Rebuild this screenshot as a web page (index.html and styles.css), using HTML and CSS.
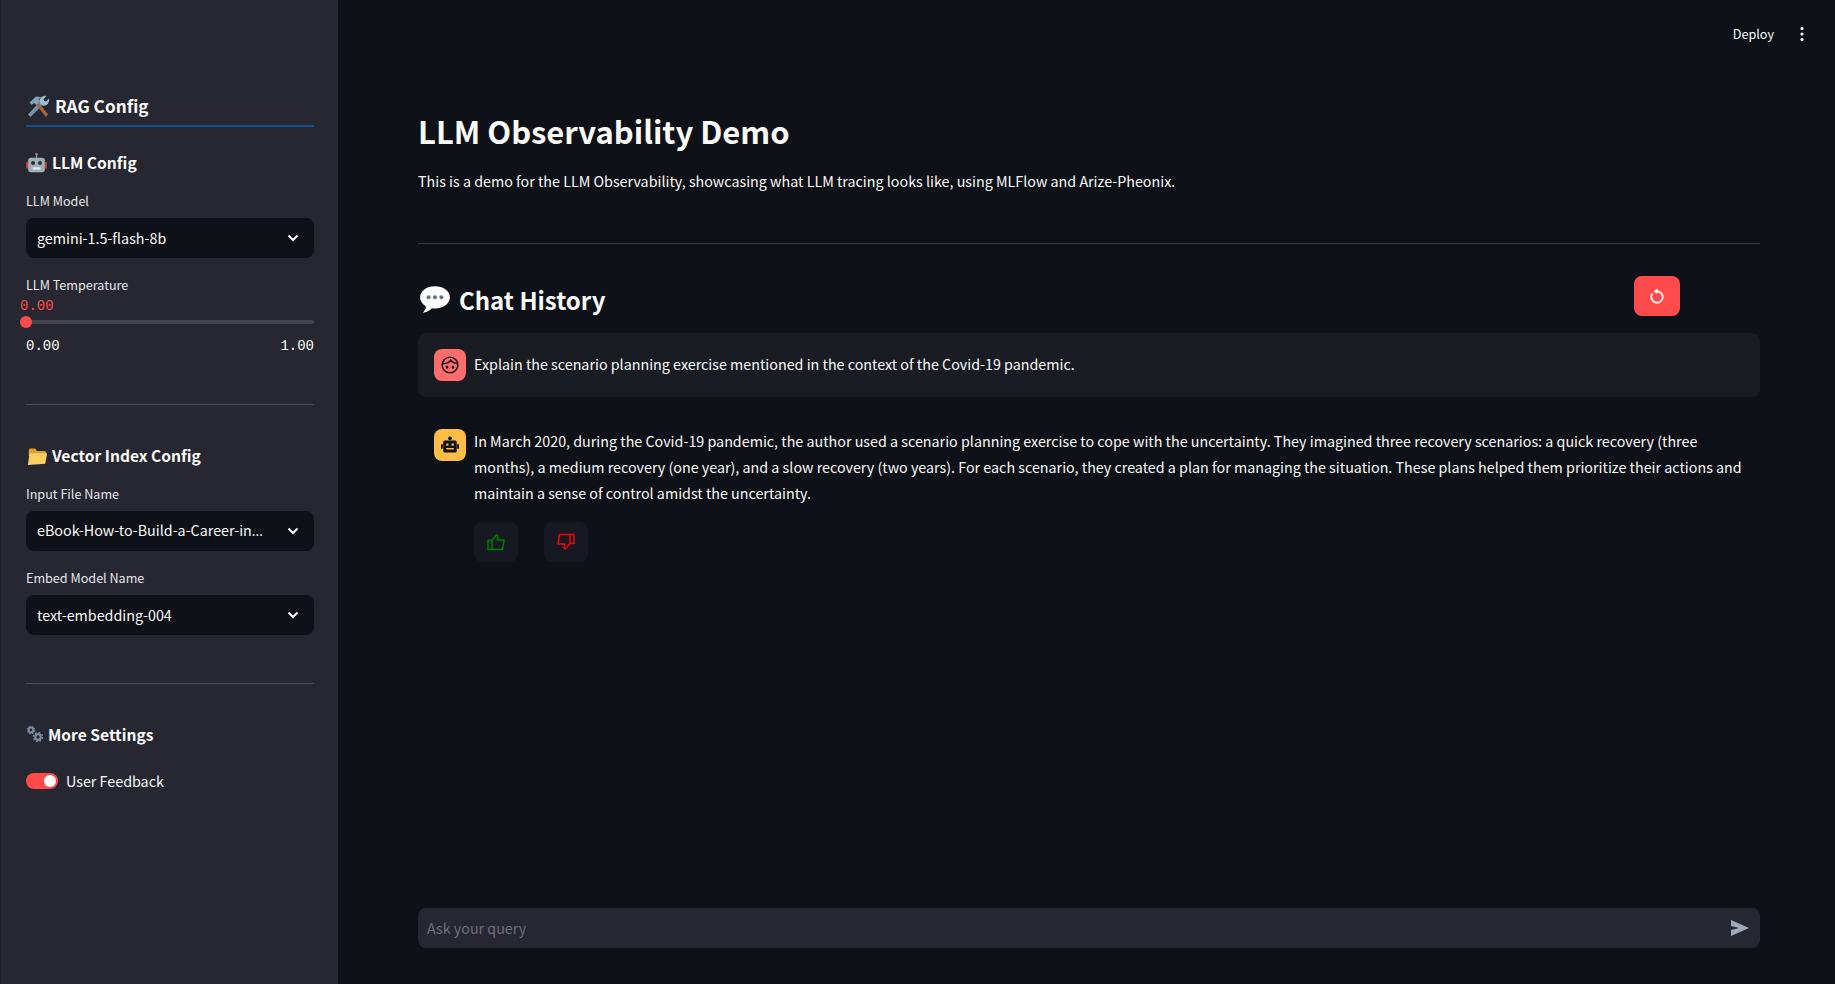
FILE: index.html
```html
<!DOCTYPE html>
<html lang="en">
<head>
  <meta charset="UTF-8">
  <meta name="viewport" content="width=device-width, initial-scale=1.0">
  <title>LLM Observability Demo</title>
  <link rel="stylesheet" href="styles.css">
</head>
<body>
  <aside class="sidebar">
    <h2 class="rag-title">
      <svg class="emoji emoji-tools" viewBox="0 0 24 24"><path d="M2 20.500 13.500 8l3 2.800L4.500 23z" fill="#6f97a8"/><path d="M22 20.500 11 6.500 8.500 8.500 20 23z" fill="#a9683a"/><path d="M3.500 8.500 10 2.500l5 .5-2.500 2.500 1 2.500-3 3-2.500-2-2.500 2z" fill="#7ea4b5"/><path d="M13.500 8.500a5.500 5.500 0 0 1 7-6.500l-3 3 .5 2 2 .5 3-3a5.500 5.500 0 0 1-6.500 7z" fill="#9cc0cf"/></svg>
      <span>RAG Config</span>
    </h2>
    <h3 class="section-title llm-title">
      <svg class="emoji" viewBox="0 0 24 24"><circle cx="12" cy="2.500" r="1.500" fill="#c9716f"/><rect x="11.300" y="3" width="1.400" height="4" fill="#8a99a3"/><rect x="0" y="11" width="3" height="8" rx="1" fill="#c8383a"/><rect x="21" y="11" width="3" height="8" rx="1" fill="#c8383a"/><rect x="2.500" y="6.500" width="19" height="16.500" rx="3" fill="#9fb0b9"/><circle cx="8" cy="12.500" r="2.300" fill="#2c3338"/><circle cx="16" cy="12.500" r="2.300" fill="#2c3338"/><rect x="7.500" y="17.500" width="9" height="2.500" fill="#e6e9eb"/></svg>
      <span>LLM Config</span>
    </h3>
    <label class="field-label">LLM Model</label>
    <div class="select"><span class="select-value">gemini-1.5-flash-8b</span><svg class="chevron" viewBox="0 0 16 16"><path d="M3.500 5.500 8 10l4.500-4.500" fill="none" stroke="#fafafa" stroke-width="2"/></svg></div>
    <label class="field-label temp-label">LLM Temperature</label>
    <div class="slider">
      <div class="slider-value">0.00</div>
      <div class="slider-track"><span class="slider-thumb"></span></div>
      <div class="slider-range"><span>0.00</span><span>1.00</span></div>
    </div>
    <hr class="side-rule first-rule">
    <h3 class="section-title vector-title">
      <svg class="emoji emoji-folder" viewBox="0 0 24 24"><path d="M3 7a2 2 0 0 1 2-2h5l2 2.500h8a2 2 0 0 1 2 2V13H3z" fill="#e0a030"/><path d="M4 10h19l-2 11.500-19 1.500z" fill="#fcd060"/></svg>
      <span>Vector Index Config</span>
    </h3>
    <label class="field-label">Input File Name</label>
    <div class="select"><span class="select-value">eBook-How-to-Build-a-Career-in<span class="ellipsis">…</span></span><svg class="chevron" viewBox="0 0 16 16"><path d="M3.500 5.500 8 10l4.500-4.500" fill="none" stroke="#fafafa" stroke-width="2"/></svg></div>
    <label class="field-label embed-label">Embed Model Name</label>
    <div class="select"><span class="select-value">text-embedding-004</span><svg class="chevron" viewBox="0 0 16 16"><path d="M3.500 5.500 8 10l4.500-4.500" fill="none" stroke="#fafafa" stroke-width="2"/></svg></div>
    <hr class="side-rule second-rule">
    <h3 class="section-title more-title">
      <svg class="emoji gears" viewBox="0 0 18 18"><circle cx="5" cy="5" r="2.400" fill="none" stroke="#7d8d9c" stroke-width="2"/><circle cx="5" cy="5" r="3.900" fill="none" stroke="#7d8d9c" stroke-width="1" stroke-dasharray="1.600 1.500"/><circle cx="12" cy="12" r="2.800" fill="none" stroke="#7d8d9c" stroke-width="2.200"/><circle cx="12" cy="12" r="4.600" fill="none" stroke="#7d8d9c" stroke-width="1.200" stroke-dasharray="1.900 1.700"/></svg>
      <span>More Settings</span>
    </h3>
    <div class="toggle-row"><span class="toggle"><span class="toggle-knob"></span></span><span>User Feedback</span></div>
  </aside>

  <main class="main">
    <header class="topbar">
      <span class="deploy">Deploy</span>
      <svg class="kebab" viewBox="0 0 4 16"><circle cx="2" cy="2.500" r="1.600"/><circle cx="2" cy="8" r="1.600"/><circle cx="2" cy="13.500" r="1.600"/></svg>
    </header>
    <div class="content">
      <h1>LLM Observability Demo</h1>
      <p class="intro">This is a demo for the LLM Observability, showcasing what LLM tracing looks like, using MLFlow and Arize-Pheonix.</p>
      <hr class="main-rule">
      <div class="history-head">
        <h2>
          <svg class="bubble" viewBox="0 0 32 32"><path d="M16 3C8 3 2 7.500 2 13.500c0 3.500 2 6.500 5.500 8.500-.3 2.500-1.500 4.500-3 6 3.500-.3 6.500-2 8.500-4.200 1 .2 2 .2 3 .2 8 0 14-4.500 14-10.500S24 3 16 3z" fill="#fff"/><circle cx="10" cy="13.500" r="1.900" fill="#65757f"/><circle cx="16" cy="13.500" r="1.900" fill="#65757f"/><circle cx="22" cy="13.500" r="1.900" fill="#65757f"/></svg>
          <span>Chat History</span>
        </h2>
        <button class="reset" type="button">
          <svg viewBox="0 0 16 16"><circle cx="8" cy="9" r="5.700" fill="none" stroke="#fff" stroke-width="1.700" stroke-dasharray="28 3" transform="rotate(-70 8 9)"/><path d="M8.500 0.500v5.500L4.500 3.200z" fill="#fff"/></svg>
        </button>
      </div>
      <div class="message user-message">
        <span class="avatar avatar-user">
          <svg viewBox="0 0 24 24" fill="none" stroke="#0e1117" stroke-width="1.900"><circle cx="12" cy="12" r="10.500"/><path d="M2.500 10c4 .5 8-1 10.500-4.500 1.500 2.500 4.500 4 8.500 4.500"/><circle cx="8" cy="15" r=".9" fill="#0e1117"/><circle cx="16" cy="15" r=".9" fill="#0e1117"/></svg>
        </span>
        <p>Explain the scenario planning exercise mentioned in the context of the Covid-19 pandemic.</p>
      </div>
      <div class="message bot-message">
        <span class="avatar avatar-bot">
          <svg viewBox="0 0 24 24" fill="#0e1117"><circle cx="12" cy="3" r="2.500"/><path d="M0 11h2.500v6H0zM21.500 11H24v6h-2.500z"/><path fill-rule="evenodd" d="M5 6h14a2 2 0 0 1 2 2v12a2 2 0 0 1-2 2H5a2 2 0 0 1-2-2V8a2 2 0 0 1 2-2zm2 4v3h3v-3zm7 0v3h3v-3zm-7 6v2h10v-2z"/></svg>
        </span>
        <div class="bot-body">
          <p>In March 2020, during the Covid-19 pandemic, the author used a scenario planning exercise to cope with the uncertainty. They imagined three recovery scenarios: a quick recovery (three months), a medium recovery (one year), and a slow recovery (two years). For each scenario, they created a plan for managing the situation. These plans helped them prioritize their actions and maintain a sense of control amidst the uncertainty.</p>
          <div class="feedback">
            <button class="thumb thumb-up" type="button"><svg viewBox="0 0 18 18" fill="none" stroke="currentColor" stroke-width="1.500"><path d="M1 7.500h4v9H1zM5 7.500 9.500 2 11 3l-.5 4h6.500l-1.500 9.500H5"/></svg></button>
            <button class="thumb thumb-down" type="button"><svg viewBox="0 0 18 18" fill="none" stroke="currentColor" stroke-width="1.500"><path d="M17 10.500h-4v-9h4zM13 10.500 8.500 16 7 15l.5-4H1l1.500-9.500H13"/></svg></button>
          </div>
        </div>
      </div>
      <div class="chat-input">
        <span class="placeholder">Ask your query</span>
        <svg class="send" viewBox="0 0 18 16"><path d="M0 0 18 8 0 16V10L8 8 0 6z" fill="#a3a8b8"/></svg>
      </div>
    </div>
  </main>
</body>
</html>
```

FILE: styles.css
```css
* {
  box-sizing: border-box;
}
body {
  margin: 0;
  height: 100vh;
  display: flex;
  overflow: hidden;
  background: #0e1117;
  color: #fafafa;
  font-family: "Noto Sans CJK SC", "Open Sans", sans-serif;
  font-size: 14.3px;
  line-height: 1.6;
}
h1, h2, h3, p {
  margin: 0;
}
hr {
  border: none;
  margin: 0;
  height: 1px;
}

/* sidebar */
.sidebar {
  width: 338px;
  flex-shrink: 0;
  padding: 88px 24px 0 25px;
  background: #262730;
  border-left: 1px solid #1c1d24;
  display: flex;
  flex-direction: column;
}
.emoji {
  width: 21px;
  height: 21px;
  flex-shrink: 0;
}
.rag-title {
  font-size: 17.2px;
  font-weight: 600;
  height: 39px;
  padding-bottom: 2px;
  border-bottom: 2px solid #0d5296;
  display: flex;
  align-items: center;
  gap: 5px;
}
.emoji-tools {
  width: 24px;
  height: 24px;
}
.section-title {
  height: 28px;
  padding-bottom: 2px;
  font-size: 15.6px;
  font-weight: 600;
  line-height: 26px;
  display: flex;
  align-items: center;
  gap: 5px;
}
.llm-title {
  margin-top: 22px;
}
.field-label {
  font-size: 12.6px;
  line-height: 20px;
  color: #e6e6ea;
}
.llm-title + .field-label {
  margin-top: 14px;
}
.select {
  height: 40px;
  margin-top: 7px;
  padding: 0 13px 0 11px;
  border-radius: 8px;
  background: #0e1117;
  display: flex;
  align-items: center;
  gap: 8px;
}
.select-value {
  flex: 1;
  min-width: 0;
  overflow: hidden;
  white-space: nowrap;
}
.ellipsis {
  font-family: "Open Sans", sans-serif;
}
.chevron {
  width: 16px;
  height: 16px;
  flex-shrink: 0;
}
.temp-label {
  margin-top: 17px;
}
.slider-value {
  margin-top: 1px;
  margin-left: -6px;
  font-family: "Liberation Mono", monospace;
  font-size: 14px;
  line-height: 20px;
  color: #ff4b4b;
}
.slider-track {
  position: relative;
  height: 4px;
  margin-top: 4px;
  border-radius: 2px;
  background: #45464f;
}
.slider-thumb {
  position: absolute;
  left: -6px;
  top: -4px;
  width: 12px;
  height: 12px;
  border-radius: 50%;
  background: #ff4b4b;
}
.slider-range {
  margin-top: 12px;
  display: flex;
  justify-content: space-between;
  font-family: "Liberation Mono", monospace;
  font-size: 14px;
  line-height: 20px;
}
.side-rule {
  background: #4c4d57;
}
.first-rule {
  margin-top: 48px;
}
.vector-title {
  margin-top: 37px;
  gap: 4px;
}
.emoji-folder {
  width: 22px;
  height: 22px;
}
.vector-title + .field-label {
  margin-top: 14px;
}
.embed-label {
  margin-top: 17px;
}
.second-rule {
  margin-top: 48px;
}
.more-title {
  margin-top: 37px;
  gap: 4px;
}
.gears {
  width: 18px;
  height: 18px;
}
.toggle-row {
  margin-top: 20px;
  display: flex;
  align-items: center;
  gap: 8px;
  line-height: 24px;
}
.toggle {
  width: 32px;
  height: 16px;
  padding: 2px;
  border-radius: 8px;
  background: #ff4b4b;
  display: flex;
  justify-content: flex-end;
}
.toggle-knob {
  width: 12px;
  height: 12px;
  border-radius: 50%;
  background: #fff;
}

/* main area */
.main {
  flex: 1;
  min-width: 0;
  display: flex;
  flex-direction: column;
}
.topbar {
  height: 68px;
  flex-shrink: 0;
  padding-right: 31px;
  display: flex;
  align-items: center;
  justify-content: flex-end;
  gap: 26px;
}
.deploy {
  font-size: 12.6px;
}
.kebab {
  width: 4px;
  height: 16px;
  fill: #fafafa;
}
.content {
  flex: 1;
  min-height: 0;
  padding: 39px 75px 36px 80px;
  display: flex;
  flex-direction: column;
}
h1 {
  font-size: 31px;
  font-weight: 600;
  line-height: 48px;
}
.intro {
  margin-top: 15px;
}
.main-rule {
  margin-top: 50px;
  background: #3a3b42;
}
.history-head {
  margin-top: 32px;
  height: 57px;
  display: flex;
  align-items: flex-start;
  justify-content: space-between;
  padding-right: 80px;
}
.history-head h2 {
  font-size: 24px;
  font-weight: 600;
  line-height: 48px;
  display: flex;
  align-items: center;
  gap: 7px;
}
.bubble {
  width: 34px;
  height: 34px;
}
.reset {
  width: 46px;
  height: 40px;
  padding: 0;
  border: none;
  border-radius: 8px;
  background: #ff4b4b;
  display: flex;
  align-items: center;
  justify-content: center;
}
.reset svg {
  width: 16px;
  height: 16px;
}
.message {
  display: flex;
  gap: 8px;
  padding: 16px;
  border-radius: 8px;
}
.user-message {
  height: 64px;
  background: #1a1c24;
  align-items: center;
}
.bot-message {
  margin-top: 16px;
  align-items: flex-start;
}
.avatar {
  width: 32px;
  height: 32px;
  flex-shrink: 0;
  padding: 7px;
  border-radius: 8px;
  display: flex;
}
.avatar-user {
  background: #ff6c6c;
}
.avatar-bot {
  background: #ffbd45;
}
.avatar svg {
  width: 18px;
  height: 18px;
}
.bot-body {
  flex: 1;
  min-width: 0;
}
.bot-body p {
  margin-top: -1px;
  line-height: 26px;
}
.feedback {
  margin-top: 16px;
  display: flex;
  gap: 26px;
}
.thumb {
  width: 44px;
  height: 40px;
  padding: 0;
  border: none;
  border-radius: 8px;
  background: #161921;
  display: flex;
  align-items: center;
  justify-content: center;
}
.thumb-up {
  color: #008000;
}
.thumb-down {
  color: #ff0000;
}
.thumb svg {
  width: 18px;
  height: 18px;
}
.chat-input {
  height: 40px;
  margin-top: auto;
  padding: 0 11px 0 9px;
  border-radius: 8px;
  background: #262730;
  display: flex;
  align-items: center;
  justify-content: space-between;
}
.placeholder {
  color: #6e7079;
}
.send {
  width: 18px;
  height: 16px;
}
```
